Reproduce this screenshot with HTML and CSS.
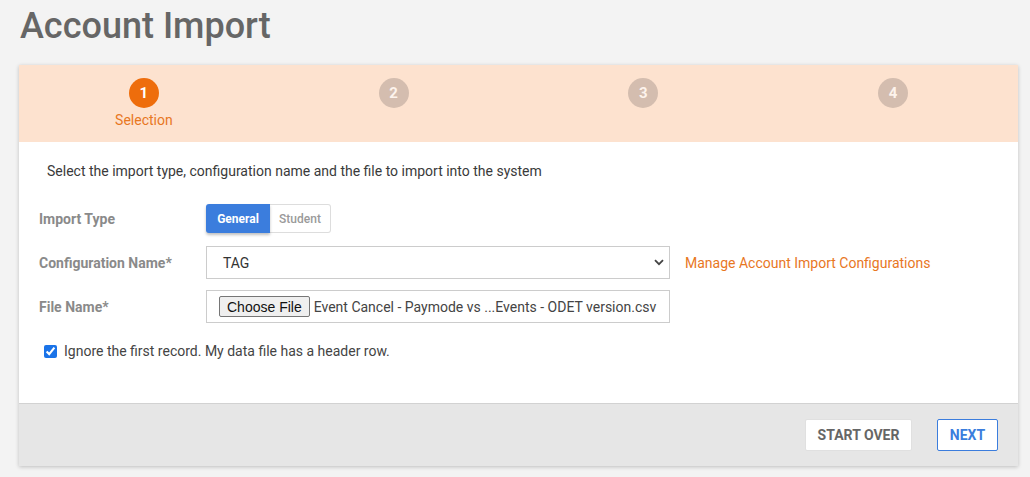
FILE: index.html
```html
<!DOCTYPE html>
<html>
<head>
<meta charset="utf-8">
<link rel="stylesheet" href="styles.css">
</head>
<body>
<h1 class="title">Account Import</h1>
<div class="card">
  <div class="stepper">
    <div class="step active"><span class="dot">1</span><span class="step-label">Selection</span></div>
    <div class="step"><span class="dot">2</span></div>
    <div class="step"><span class="dot">3</span></div>
    <div class="step"><span class="dot">4</span></div>
  </div>
  <div class="content">
    <p class="intro">Select the import type, configuration name and the file to import into the system</p>
    <div class="row row-type">
      <label class="label">Import Type</label>
      <div class="toggle">
        <span class="tg tg-on">General</span>
        <span class="tg tg-off">Student</span>
      </div>
    </div>
    <div class="row row-config">
      <label class="label">Configuration Name*</label>
      <div class="select">
        <span>TAG</span>
        <svg class="chev" width="10" height="7" viewBox="0 0 10 7"><path d="M1 1.2 L5 5.2 L9 1.2" fill="none" stroke="#444" stroke-width="1.8"/></svg>
      </div>
      <a class="link">Manage Account Import Configurations</a>
    </div>
    <div class="row row-file">
      <label class="label">File Name*</label>
      <div class="file">
        <span class="file-btn">Choose File</span>
        <span class="file-name">Event Cancel - Paymode vs ...Events - ODET version.csv</span>
      </div>
    </div>
    <div class="check-row">
      <input type="checkbox" class="check" checked>
      <span class="check-text">Ignore the first record. My data file has a header row.</span>
    </div>
  </div>
  <div class="footer">
    <button class="btn btn-plain">START OVER</button>
    <button class="btn btn-primary">NEXT</button>
  </div>
</div>
</body>
</html>
```
FILE: styles.css
```css
* { box-sizing: border-box; }
html, body { margin: 0; }
body {
  background: #f3f3f3;
  font-family: Roboto, "Liberation Sans", Arial, sans-serif;
  padding: 0 12px 0 19px;
  width: 1030px;
  height: 477px;
  overflow: hidden;
}
.title {
  margin: 0;
  padding: 5px 0 0 1px;
  font-size: 36px;
  line-height: 43px;
  font-weight: 500;
  color: #666;
}
.card {
  margin-top: 17px;
  width: 999px;
  background: #fff;
  box-shadow: 0 1px 4px rgba(0,0,0,0.22);
}
.stepper {
  height: 77px;
  background: #fde2cf;
  display: grid;
  grid-template-columns: repeat(4, 1fr);
}
.step {
  display: flex;
  flex-direction: column;
  align-items: center;
  padding-top: 13px;
}
.dot {
  width: 30px;
  height: 30px;
  border-radius: 50%;
  background: #d4bdaf;
  color: #fdf3ec;
  font-weight: 700;
  font-size: 15px;
  display: flex;
  align-items: center;
  justify-content: center;
}
.step.active .dot { background: #ee6d0c; color: #fff; }
.step-label {
  margin-top: 3px;
  font-size: 14px;
  color: #e8771f;
  line-height: 18px;
}
.content {
  height: 261px;
  padding: 21px 20px 0 20px;
}
.intro {
  margin: 0 0 0 8px;
  font-size: 14px;
  line-height: 17px;
  color: #3a3a3a;
}
.row {
  display: flex;
  align-items: center;
}
.row-type { margin-top: 24px; }
.row-config { margin-top: 13px; }
.row-file { margin-top: 11px; }
.label {
  width: 167px;
  font-size: 14px;
  font-weight: 700;
  color: #8a8a8a;
}
.toggle {
  display: flex;
  height: 29px;
}
.tg {
  display: flex;
  align-items: center;
  font-size: 12px;
  font-weight: 700;
}
.tg-on {
  width: 64px;
  justify-content: center;
  background: #3b7ddd;
  color: #fff;
  border-radius: 3px 0 0 3px;
  box-shadow: 0 2px 3px rgba(0,0,0,0.25);
  position: relative;
}
.tg-off {
  width: 61px;
  justify-content: center;
  border: 1px solid #ddd;
  border-left: none;
  border-radius: 0 3px 3px 0;
  color: #9a9a9a;
  font-weight: 500;
}
.select {
  width: 464px;
  height: 33px;
  border: 1px solid #ccc;
  display: flex;
  align-items: center;
  justify-content: space-between;
  padding: 0 5px 0 16px;
  font-size: 14px;
  color: #333;
}
.link {
  margin-left: 15px;
  font-size: 14px;
  color: #e8771f;
}
.file {
  width: 464px;
  height: 33px;
  border: 1px solid #ccc;
  display: flex;
  align-items: center;
  padding-left: 12px;
  font-size: 14px;
  color: #333;
}
.file-btn {
  height: 21px;
  padding: 0 7px;
  border: 1px solid #767676;
  border-radius: 2px;
  background: #efefef;
  color: #111;
  font-family: "Liberation Sans", Arial, sans-serif;
  font-size: 14px;
  display: flex;
  align-items: center;
}
.file-name {
  margin-left: 4px;
  font-size: 14px;
  color: #444;
}
.check-row {
  margin-top: 20px;
  margin-left: 5px;
  display: flex;
  align-items: center;
}
.check {
  margin: 0;
  width: 13px;
  height: 13px;
  accent-color: #1a73e8;
}
.check-text {
  margin-left: 7px;
  font-size: 14px;
  color: #444;
}
.footer {
  height: 63px;
  background: #e6e6e6;
  border-top: 1px solid #d2d2d2;
  display: flex;
  align-items: center;
  justify-content: flex-end;
  gap: 25px;
  padding-right: 20px;
}
.btn {
  height: 32px;
  font-family: Roboto, "Liberation Sans", Arial, sans-serif;
  font-size: 14px;
  font-weight: 700;
  border-radius: 2px;
  background: #fff;
  cursor: pointer;
}
.btn-plain {
  width: 107px;
  border: 1px solid #e0e0e0;
  color: #666;
}
.btn-primary {
  width: 61px;
  border: 1px solid #3b7ddd;
  color: #3b7ddd;
}
```
